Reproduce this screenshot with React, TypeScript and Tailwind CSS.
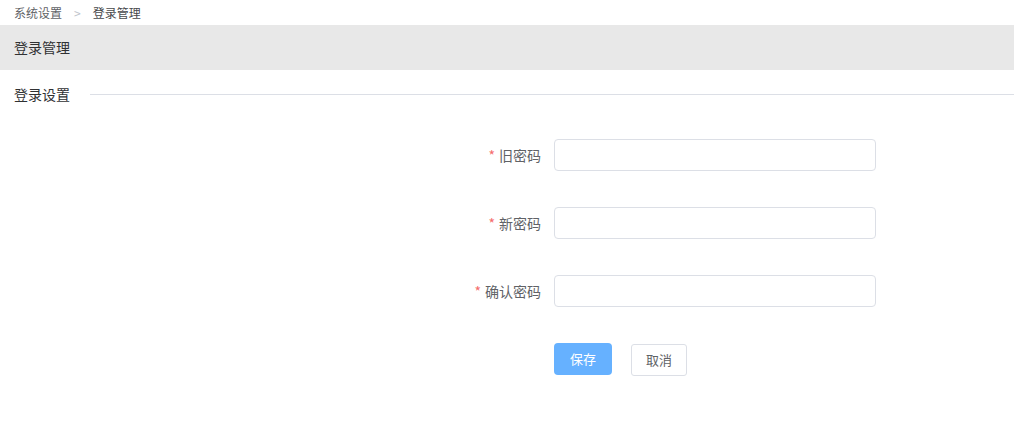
import React from "react";

const fields = ["旧密码", "新密码", "确认密码"];

function App() {
  return (
    <div
      className="w-[1015px] h-[425px] bg-white text-[#333]"
      style={{ fontFamily: '"Noto Sans CJK SC", "Noto Sans", sans-serif' }}
    >
      <div className="h-[25px] px-[14px] flex items-center text-[12px] leading-none">
        <span className="text-[#606266]">系统设置</span>
        <span className="mx-[12px] text-[#c0c4cc]">&gt;</span>
        <span className="text-[#48494c]">登录管理</span>
      </div>
      <div className="h-[45px] mr-[1px] bg-[#e8e8e8] px-[14px] flex items-center text-[14px] text-[#303133]">
        登录管理
      </div>
      <div className="h-[48px] pt-[14px] flex items-start">
        <span className="pl-[14px] text-[14px] leading-[20px] text-[#303133]">登录设置</span>
        <div className="flex-1 mt-[10px] mr-[1px] ml-[20px] h-px bg-[#dcdfe6]" />
      </div>
      <div className="pl-[442px] pt-[21px] flex flex-col gap-[36px]">
        {fields.map((f) => (
          <div key={f} className="flex items-center h-[32px]">
            <label className="w-[112px] pr-[13px] text-right text-[14px] text-[#606266]">
              <span className="text-[#f56c6c] mr-[4px]">*</span>
              {f}
            </label>
            <input
              type="password"
              className="w-[322px] h-[32px] border border-[#dcdfe6] rounded-[4px] outline-none px-[15px]"
            />
          </div>
        ))}
        <div className="flex items-start pl-[112px]">
          <button className="w-[58px] h-[32px] rounded-[4px] bg-[#66b1ff] text-white text-[13px]">
            保存
          </button>
          <button className="w-[56px] h-[32px] mt-[1px] ml-[19px] rounded-[3px] border border-[#dcdfe6] bg-white text-[#606266] text-[13px]">
            取消
          </button>
        </div>
      </div>
    </div>
  );
}

export default App;
